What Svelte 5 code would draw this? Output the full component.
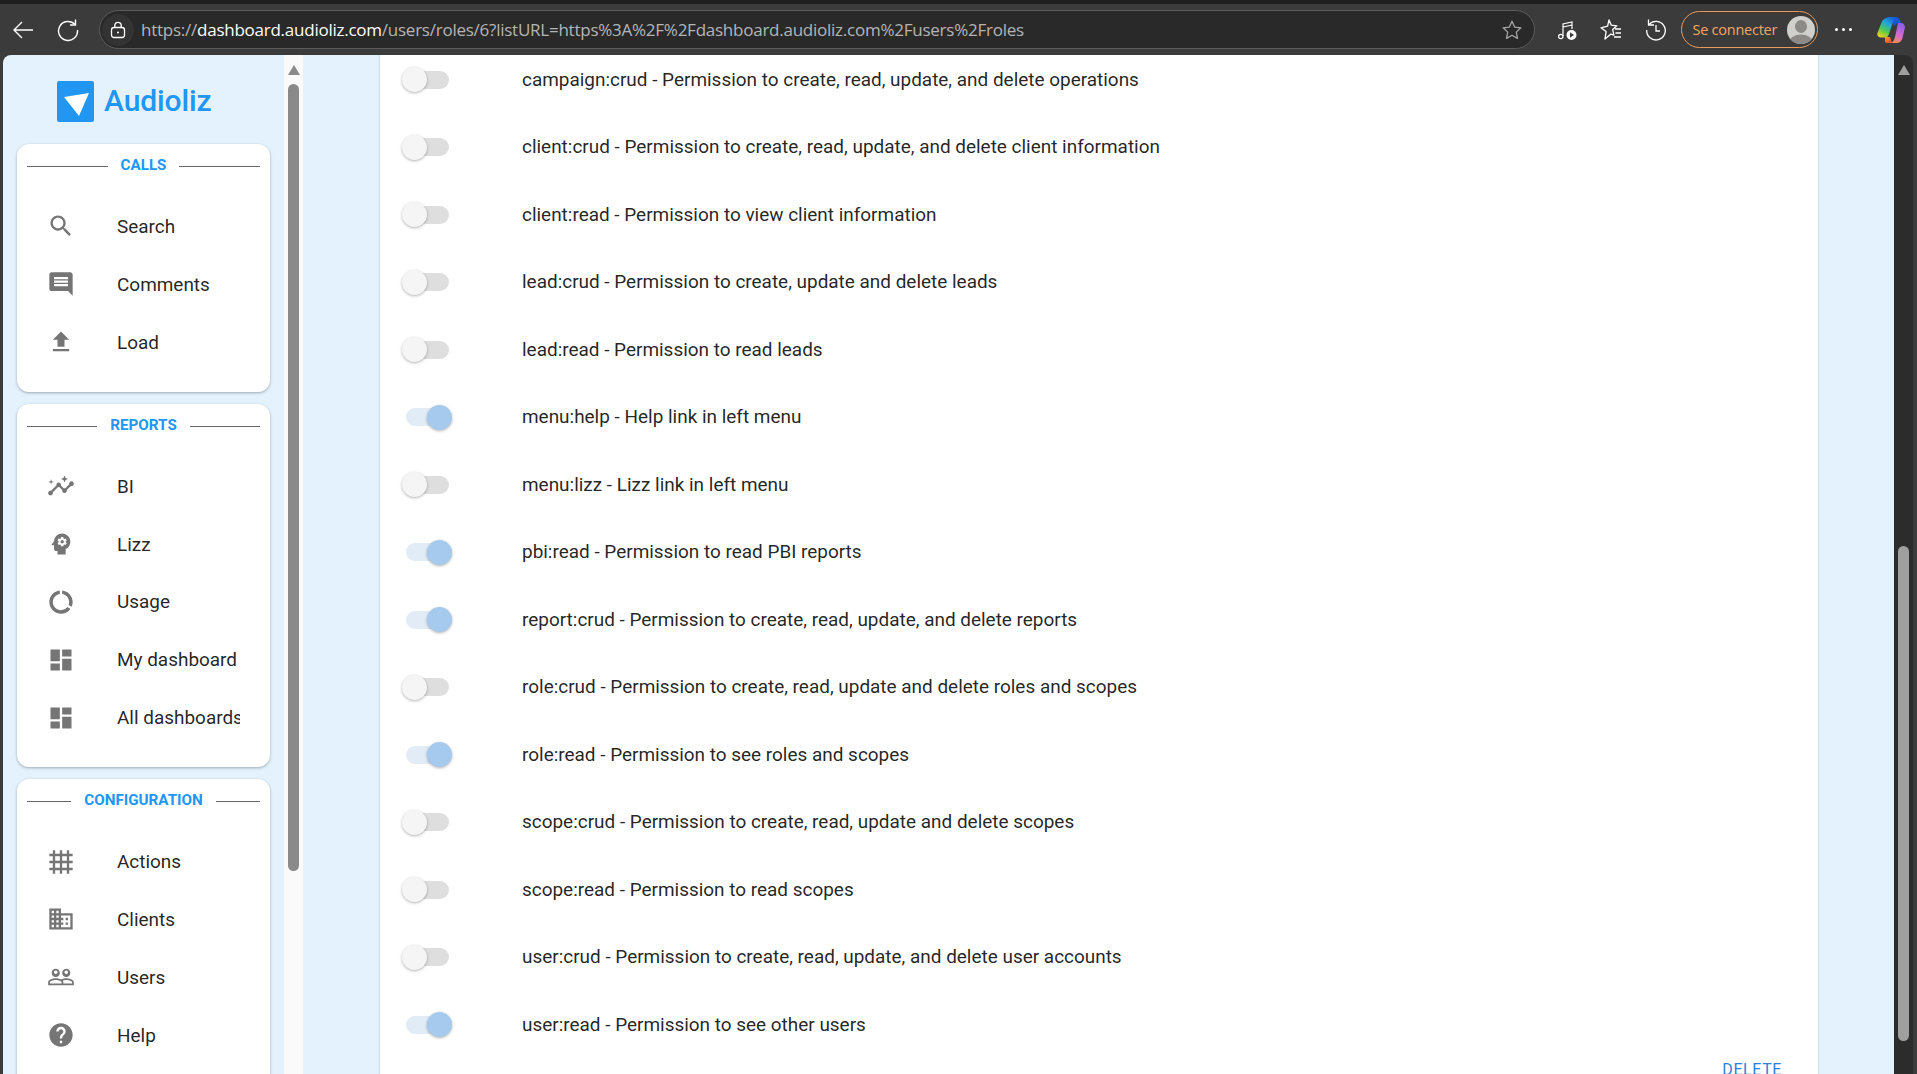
<script>
const P = {
  search: 'M15.5 14h-.79l-.28-.27C15.41 12.59 16 11.11 16 9.5 16 5.91 13.09 3 9.5 3S3 5.91 3 9.5 5.91 16 9.5 16c1.61 0 3.09-.59 4.23-1.57l.27.28v.79l5 4.99L20.49 19l-4.99-5zm-6 0C7.01 14 5 11.99 5 9.5S7.01 5 9.5 5 14 7.01 14 9.5 11.99 14 9.5 14z',
  comment: 'M21.99 4c0-1.1-.89-2-1.99-2H4c-1.1 0-2 .9-2 2v12c0 1.1.9 2 2 2h14l4 4-.01-18zM18 14H6v-2h12v2zm0-3H6V9h12v2zm0-3H6V6h12v2z',
  upload: 'M9 16h6v-6h4l-7-7-7 7h4zm-4 2h14v2H5z',
  insights: 'M21 8c-1.45 0-2.26 1.44-1.93 2.51l-3.55 3.56c-.3-.09-.74-.09-1.04 0l-2.55-2.55C12.27 10.45 11.46 9 10 9c-1.45 0-2.27 1.44-1.93 2.52l-4.56 4.55C2.44 15.74 1 16.55 1 18c0 1.1.9 2 2 2 1.45 0 2.26-1.44 1.93-2.51l4.55-4.56c.3.09.74.09 1.04 0l2.55 2.55C12.73 16.55 13.54 18 15 18c1.45 0 2.27-1.44 1.93-2.52l3.56-3.55C21.56 12.26 23 11.45 23 10c0-1.1-.9-2-2-2zM15 9l.94-2.07L18 6l-2.06-.93L15 3l-.92 2.07L12 6l2.08.93zM3.5 11L4 9l2-.5L4 8l-.5-2L3 8l-2 .5L3 9z',
  psychology: 'M13 8.57c-.79 0-1.43.64-1.43 1.43s.64 1.43 1.43 1.43 1.43-.64 1.43-1.43-.64-1.43-1.43-1.43zM13 3C9.25 3 6.2 5.94 6.02 9.64L4.1 12.2c-.25.33-.01.8.4.8H6v3c0 1.1.9 2 2 2h1v3h7v-4.68c2.36-1.12 4-3.53 4-6.32 0-3.87-3.13-7-7-7zm3 7c0 .13-.01.26-.02.39l.83.66c.08.06.1.16.05.25l-.8 1.39c-.05.09-.16.12-.24.09l-.99-.4c-.21.16-.43.29-.67.39L14 13.83c-.01.1-.1.17-.2.17h-1.6c-.1 0-.18-.07-.2-.17l-.15-1.06c-.25-.1-.47-.23-.68-.39l-.99.4c-.09.03-.2 0-.25-.09l-.8-1.39c-.05-.08-.03-.19.05-.25l.84-.66c-.01-.13-.02-.26-.02-.39s.02-.27.04-.39l-.85-.66c-.08-.06-.1-.16-.05-.26l.8-1.38c.05-.09.15-.12.24-.09l1 .4c.2-.15.43-.29.67-.39L12 6.17c.02-.1.1-.17.2-.17h1.6c.1 0 .18.07.2.17l.15 1.06c.24.1.46.23.67.39l1-.4c.09-.03.2 0 .24.09l.8 1.38c.05.09.03.2-.05.26l-.85.66c.03.12.04.25.04.39z',
  usage: 'M13 2.05v3.03c3.39.49 6 3.39 6 6.92 0 .9-.18 1.75-.48 2.54l2.6 1.53c.56-1.24.88-2.62.88-4.07 0-5.18-3.95-9.45-9-9.95zM12 19c-3.87 0-7-3.13-7-7 0-3.53 2.61-6.43 6-6.92V2.05c-5.06.5-9 4.76-9 9.95 0 5.52 4.47 10 9.99 10 3.31 0 6.24-1.61 8.06-4.09l-2.6-1.53C16.17 17.98 14.21 19 12 19z',
  dashboard: 'M3 13h8V3H3v10zm0 8h8v-6H3v6zm10 0h8V11h-8v10zm0-18v6h8V3h-8z',
  grid: 'M22 7V5h-3V2h-2v3h-4V2h-2v3H7V2H5v3H2v2h3v4H2v2h3v4H2v2h3v3h2v-3h4v3h2v-3h4v3h2v-3h3v-2h-3v-4h3v-2h-3V7h3zM7 7h4v4H7V7zm0 10v-4h4v4H7zm10 0h-4v-4h4v4zm0-6h-4V7h4v4z',
  business: 'M12 7V3H2v18h20V7H12zM6 19H4v-2h2v2zm0-4H4v-2h2v2zm0-4H4V9h2v2zm0-4H4V5h2v2zm4 12H8v-2h2v2zm0-4H8v-2h2v2zm0-4H8V9h2v2zm0-4H8V5h2v2zm10 12h-8v-2h2v-2h-2v-2h2v-2h-2V9h8v10zm-2-8h-2v2h2v-2zm0 4h-2v2h2v-2z',
  people: 'M16.5 13c-1.2 0-3.07.34-4.5 1-1.43-.67-3.3-1-4.5-1C5.33 13 1 14.08 1 16.25V19h22v-2.75c0-2.17-4.33-3.25-6.5-3.25zm-4 4.5h-10v-1.25c0-.54 2.56-1.75 5-1.75s5 1.21 5 1.75v1.25zm9 0H14v-1.25c0-.46-.2-.86-.52-1.22.88-.3 1.96-.53 3.02-.53 2.44 0 5 1.21 5 1.75v1.25zM7.5 12c1.93 0 3.5-1.57 3.5-3.5S9.43 5 7.5 5 4 6.57 4 8.5 5.57 12 7.5 12zm0-5.5c.83 0 1.5.67 1.5 1.5s-.67 1.5-1.5 1.5S6 8.83 6 8s.67-1.5 1.5-1.5zm9 5.5c1.93 0 3.5-1.57 3.5-3.5S18.43 5 16.5 5 13 6.57 13 8.5s1.57 3.5 3.5 3.5zm0-5.5c.83 0 1.5.67 1.5 1.5s-.67 1.5-1.5 1.5S15 8.83 15 8s.67-1.5 1.5-1.5z',
  help: 'M12 2C6.48 2 2 6.48 2 12s4.48 10 10 10 10-4.48 10-10S17.52 2 12 2zm1 17h-2v-2h2v2zm2.07-7.75l-.9.92C13.45 12.9 13 13.5 13 15h-2v-.5c0-1.1.45-2.1 1.17-2.83l1.24-1.26c.37-.36.59-.86.59-1.41 0-1.1-.9-2-2-2s-2 .9-2 2H8c0-2.21 1.79-4 4-4s4 1.79 4 4c0 .88-.36 1.68-.93 2.25z'
};
const groups = [
  { title: 'Calls', items: [['Search', 'search'], ['Comments', 'comment'], ['Load', 'upload']] },
  { title: 'Reports', items: [['BI', 'insights'], ['Lizz', 'psychology'], ['Usage', 'usage'], ['My dashboard', 'dashboard'], ['All dashboards', 'dashboard']] },
  { title: 'Configuration', items: [['Actions', 'grid'], ['Clients', 'business'], ['Users', 'people'], ['Help', 'help']] }
];
const perms = [
  ['campaign:crud - Permission to create, read, update, and delete operations', false],
  ['client:crud - Permission to create, read, update, and delete client information', false],
  ['client:read - Permission to view client information', false],
  ['lead:crud - Permission to create, update and delete leads', false],
  ['lead:read - Permission to read leads', false],
  ['menu:help - Help link in left menu', true],
  ['menu:lizz - Lizz link in left menu', false],
  ['pbi:read - Permission to read PBI reports', true],
  ['report:crud - Permission to create, read, update, and delete reports', true],
  ['role:crud - Permission to create, read, update and delete roles and scopes', false],
  ['role:read - Permission to see roles and scopes', true],
  ['scope:crud - Permission to create, read, update and delete scopes', false],
  ['scope:read - Permission to read scopes', false],
  ['user:crud - Permission to create, read, update, and delete user accounts', false],
  ['user:read - Permission to see other users', true]
];
</script>

<div class="window">
  <div class="tabstrip"></div>
  <header class="toolbar">
    <button class="tb back" aria-label="Back">
      <svg width="24" height="24" viewBox="0 0 24 24" fill="none" stroke="#fff" stroke-width="1.4"><path d="M22 12H3M11 4l-8 8 8 8"/></svg>
    </button>
    <button class="tb reload" aria-label="Reload">
      <svg width="24" height="24" viewBox="0 0 24 24" fill="none" stroke="#fff" stroke-width="1.4"><path d="M19 6.5A9.5 9.5 0 1 0 21.500 12"/><path d="M19.500 1.500v5.500H14"/></svg>
    </button>
    <div class="address">
      <span class="lock">
        <svg width="18" height="18" viewBox="0 0 18 18" fill="none" stroke="#fff" stroke-width="1.3"><rect x="2.500" y="6.500" width="13" height="10" rx="2.500"/><path d="M5.800 6.500V4.500a3.200 3.200 0 0 1 6.400 0v2"/><circle cx="9" cy="11.500" r="1" fill="#fff" stroke="none"/></svg>
      </span>
      <span class="url"><span class="dim">https://</span>dashboard.audioliz.com<span class="dim">/users/roles/6?listURL=https%3A%2F%2Fdashboard.audioliz.com%2Fusers%2Froles</span></span>
      <svg class="star" width="22" height="22" viewBox="0 0 24 24" fill="none" stroke="#a8a8a8" stroke-width="1.4" stroke-linejoin="round"><path d="M12 2.500l2.900 6.300 6.800.8-5 4.700 1.300 6.800-6-3.400-6 3.400 1.300-6.800-5-4.700 6.800-.8z"/></svg>
    </div>
    <div class="tools">
      <svg class="t1" width="22" height="24" viewBox="0 0 22 24" fill="none" stroke="#fff" stroke-width="1.200"><path d="M7 18V6l9-2v7M7 9l9-2"/><circle cx="4.800" cy="18.500" r="2.200"/><circle cx="15.500" cy="17" r="5" fill="#fff" stroke="none"/><path d="M14 14.300l4 2.700-4 2.700z" fill="#3b3b3b" stroke="none"/></svg>
      <svg class="t2" width="24" height="24" viewBox="0 0 24 24" fill="none" stroke="#fff" stroke-width="1.300" stroke-linejoin="round"><path d="M10 2l2.300 5.200 5.500.6-4.100 3.800 1.200 5.500-3-1-5.900 5 1.100-7.500-5.100-3.800 6.600-1.600z"/><path d="M16 11h6M16.500 15h5.500M15 19h7"/></svg>
      <svg class="t3" width="24" height="24" viewBox="0 0 24 24" fill="none" stroke="#fff" stroke-width="1.300"><path d="M5 6.500A9.300 9.300 0 1 1 2.700 12"/><path d="M4.500 1.500v5.500H10M12 7v6h4"/></svg>
      <div class="signin">
        <span>Se connecter</span>
        <svg width="28" height="28" viewBox="0 0 28 28"><defs><clipPath id="av"><circle cx="14" cy="14" r="14"/></clipPath></defs><circle cx="14" cy="14" r="14" fill="#cfcfcb"/><g clip-path="url(#av)" fill="#8b8a86"><ellipse cx="14" cy="10.500" rx="6" ry="6.500"/><ellipse cx="14" cy="27" rx="12" ry="8.500"/></g></svg>
      </div>
      <span class="dots"><i></i><i></i><i></i></span>
      <svg class="copilot" width="28" height="26" viewBox="0 0 28 26">
        <defs>
          <linearGradient id="c1" x1=".75" y1="0" x2=".2" y2="1"><stop offset="0" stop-color="#1560d8"/><stop offset=".35" stop-color="#22a8d8"/><stop offset=".65" stop-color="#4cc85a"/><stop offset="1" stop-color="#f0d020"/></linearGradient>
          <linearGradient id="c2" x1=".7" y1="0" x2=".3" y2="1"><stop offset="0" stop-color="#8a60e8"/><stop offset=".55" stop-color="#d868d0"/><stop offset="1" stop-color="#f09050"/></linearGradient>
          <linearGradient id="c3" x1="0" y1="0" x2="1" y2="1"><stop offset="0" stop-color="#f0a020"/><stop offset="1" stop-color="#e8403a"/></linearGradient>
        </defs>
        <path d="M8 20l5 0 2 6H10c-1.500 0-2.500-1.500-2-3z" fill="url(#c3)"/>
        <path d="M14 0h4c3 0 5 2 5.500 4l.5 2h-4l-3 3z" fill="#1858d8"/>
        <path d="M21 6h3c2.500 0 4.500 2.500 3.800 5l-2.300 10c-.7 3-3 5-6 5h-7c3 0 4.500-2 5.500-6l2-9c.3-2.500 1-5 1-5z" fill="url(#c2)"/>
        <path d="M13 0h7c-3 1-4 4-5 8l-3 9c-1 2.500-2 3.500-4 3.500H4c-2.500 0-4.500-2-3.500-4.500L4.500 5.500C5.500 2.500 9 0 13 0z" fill="url(#c1)"/>
      </svg>
    </div>
  </header>

  <div class="page">
    <aside class="sidebar">
      <div class="brand">
        <svg width="37" height="41" viewBox="0 0 37 41"><rect width="37" height="41" rx="2" fill="#2196f3"/><path d="M7 16l25-4-10 23z" fill="#fff"/></svg>
        <span>Audioliz</span>
      </div>
      {#each groups as g}
        <section class="group">
          <div class="ghead"><i></i><span>{g.title}</span><i></i></div>
          <ul>
            {#each g.items as [label, icon]}
              <li>
                <svg width="28" height="28" viewBox="0 0 24 24" fill="#757575"><path d={P[icon]} /></svg>
                <span class="label">{label}</span>
              </li>
            {/each}
          </ul>
        </section>
      {/each}
    </aside>
    <div class="bar light"><span class="arrow"></span><span class="thumb t-left"></span></div>
    <main class="content">
      <div class="card">
        <div class="rows">
          {#each perms as [text, on]}
            <div class="row">
              <span class="switch" class:on><span class="track"></span><span class="knob"></span></span>
              <span class="text">{text}</span>
            </div>
          {/each}
        </div>
        <div class="actions"><span>Delete</span></div>
      </div>
    </main>
    <div class="bar dark"><span class="arrow"></span><span class="thumb t-right"></span></div>
  </div>
</div>

<style>
  :global(body) { margin: 0; background: #3b3b3b; overflow: hidden; }
  .window { height: 1074px; display: flex; flex-direction: column; overflow: hidden; font-family: Roboto, "Liberation Sans", sans-serif; }
  .tabstrip { height: 4px; background: #1f1f1f; flex: none; }
  .toolbar { height: 51px; flex: none; background: #3b3b3b; display: flex; align-items: center; box-sizing: border-box; }
  .tb { width: 24px; height: 24px; padding: 0; border: 0; background: none; flex: none; }
  .back { margin-left: 11px; }
  .reload { margin-left: 21px; }
  .address { margin-left: 19px; width: 1436px; height: 39px; box-sizing: border-box; flex: none; background: #292929; border: 1.5px solid #5c5c5c; border-radius: 20px; display: flex; align-items: center; }
  .lock { width: 32px; height: 32px; margin-left: 2px; border-radius: 50%; background: #333; display: flex; align-items: center; justify-content: center; flex: none; }
  .url { margin-left: 7px; color: #fff; font: 17px "Open Sans", "Noto Sans", sans-serif; letter-spacing: -.245px; white-space: nowrap; flex: 1; }
  .dim { color: #b5b5b5; }
  .star { margin-right: 11px; flex: none; }
  .tools { display: flex; align-items: center; flex: 1; position: relative; }
  .t1 { margin-left: 21px; }
  .t2 { margin-left: 21px; }
  .t3 { margin-left: 21px; }
  .signin { margin-left: 13px; width: 137px; height: 37px; box-sizing: border-box; border: 1.5px solid #e89a5c; border-radius: 19px; display: flex; align-items: center; justify-content: space-between; padding: 0 2.500px 0 10.500px; color: #f4a668; font: 14.5px "Open Sans", "Noto Sans", sans-serif; letter-spacing: -.25px; flex: none; }
  .dots { display: flex; gap: 4px; margin-left: 17px; width: 17px; flex: none; }
  .dots i { width: 3px; height: 3px; border-radius: 50%; background: #fff; flex: none; }
  .copilot { margin-left: 25px; flex: none; }

  .page { flex: 1; min-height: 0; display: flex; overflow: hidden; padding: 0 4px 0 3px; }
  .sidebar { width: 281px; flex: none; box-sizing: border-box; background: #e3f2fd; border-top-left-radius: 8px; padding: 0 14px; overflow: hidden; }
  .brand { height: 89px; display: flex; align-items: flex-start; padding-top: 26px; padding-left: 40px; box-sizing: border-box; gap: 11px; }
  .brand span { color: #2196f3; font-weight: 500; font-size: 30px; line-height: 40px; letter-spacing: -.1px; margin-left: -1px; }
  .group { width: 253px; background: #fff; border-radius: 12px; box-shadow: 0 1px 3px rgba(0,0,0,.3); margin-bottom: 12px; padding-bottom: 21px; }
  .ghead { height: 53px; box-sizing: border-box; padding: 8px 10px 0; display: flex; align-items: flex-start; }
  .ghead i { flex: 1; height: 1px; background: #666; margin-top: 14px; }
  .ghead span { margin: 0 13px; color: #2196f3; font-size: 15.200px; font-weight: 700; line-height: 26px; text-transform: uppercase; }
  ul { list-style: none; margin: 0; padding: 0; }
  li { height: 57.900px; display: flex; align-items: center; padding-left: 30px; }
  li svg { margin-top: 1px; }
  .label { margin-left: 42px; width: 123px; overflow: hidden; white-space: nowrap; font-size: 18.950px; line-height: 26px; padding-top: 2px; color: rgba(0,0,0,.87); }

  .bar { flex: none; position: relative; }
  .light { width: 19px; background: #fafafa; }
  .dark { width: 19px; background: #2c2c2c; border-top-right-radius: 8px; }
  .arrow { position: absolute; left: 3.500px; top: 10px; width: 0; height: 0; border: 6px solid transparent; border-top: 0; border-bottom: 10px solid #8a8a8a; }
  .dark .arrow { border-bottom-color: #9f9f9f; left: 4px; }
  .thumb { position: absolute; width: 11px; border-radius: 6px; }
  .t-left { left: 4px; top: 29px; height: 787px; background: #8a8a8a; }
  .t-right { left: 4px; top: 491px; height: 495px; background: #9f9f9f; }

  .content { flex: 1; min-width: 0; background: #e3f2fd; padding: 0 76px 0 77px; overflow: hidden; }
  .card { background: #fff; height: 1100px; box-shadow: 0 0 2px rgba(0,0,0,.25); padding: 0 36px 0 22px; margin-top: -9px; }
  .row { height: 67.520px; display: flex; align-items: center; }
  .switch { position: relative; width: 50px; height: 25px; display: flex; flex: none; }
  .switch.on { justify-content: flex-end; }
  .track { position: absolute; left: 4px; right: 3px; top: 3.500px; height: 18px; border-radius: 9px; background: #dedede; }
  .knob { position: relative; width: 25px; height: 25px; border-radius: 50%; background: #f5f5f5; box-shadow: 0 1px 3px rgba(0,0,0,.3); }
  .on .track { background: #e1ecf7; }
  .on .knob { background: #a6caed; }
  .text { margin-left: 70px; font-size: 18.950px; line-height: 26px; padding-bottom: .5px; color: rgba(0,0,0,.87); white-space: nowrap; }
  .actions { display: flex; justify-content: flex-end; margin-top: -1px; padding-top: 2px; }
  .actions span { color: #2f80dd; font-size: 16px; letter-spacing: .6px; text-transform: uppercase; line-height: 20px; }
</style>
